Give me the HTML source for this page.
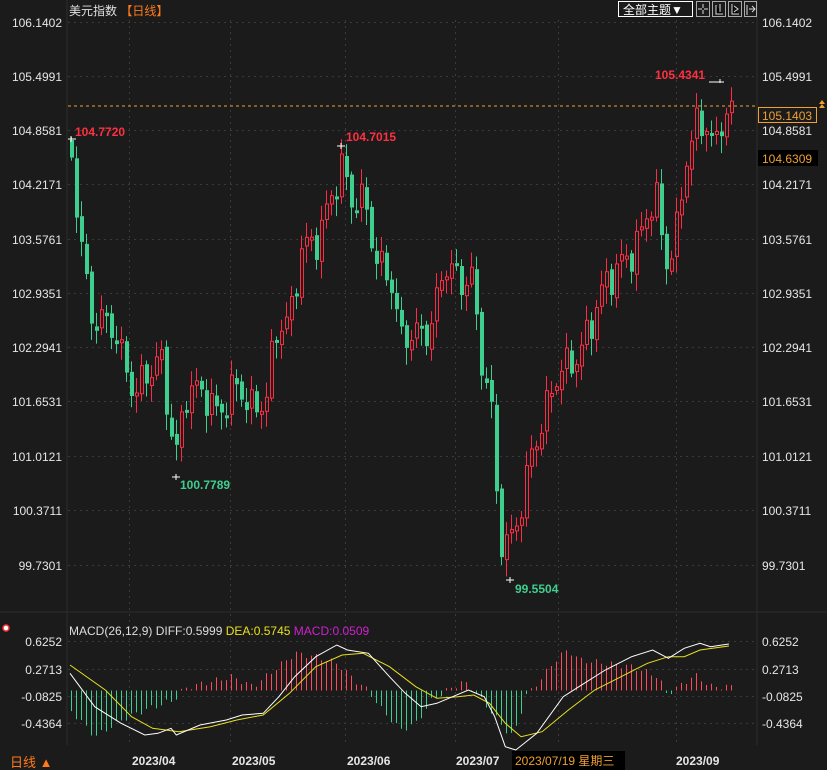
<!DOCTYPE html>
<html><head><meta charset="utf-8"><style>
html,body{margin:0;padding:0;background:#1b1b1b;}
body{width:827px;height:770px;overflow:hidden;position:relative;font-family:"Liberation Sans","Noto Sans CJK SC",sans-serif;}
svg{position:absolute;left:0;top:0}
</style></head><body>
<svg id="s" width="827" height="770" xmlns="http://www.w3.org/2000/svg" font-family="Liberation Sans, Noto Sans CJK SC, sans-serif">
<rect width="827" height="770" fill="#1b1b1b"/>
<g id="grid" stroke="#3a3a3a" stroke-dasharray="2,4" stroke-width="1"></g>
<line x1="67" y1="0" x2="67" y2="745" stroke="#2c2c2c"/>
<line x1="757" y1="0" x2="757" y2="745" stroke="#2c2c2c"/>
<line x1="0" y1="612" x2="827" y2="612" stroke="#2c2c2c"/>
<g id="cand"></g>
<g id="hist"></g>
<polyline id="dea" fill="none" stroke="#e8e020" stroke-width="1"/>
<polyline id="diff" fill="none" stroke="#ffffff" stroke-width="1"/>
<line x1="68" y1="106" x2="757" y2="106" stroke="#f0a030" stroke-dasharray="3,3"/>
<g font-size="12" fill="#e6e6e6" id="labels"></g>
<text x="69" y="15" font-size="12" fill="#e0e0e0">美元指数 <tspan fill="#ff7a1a">【日线】</tspan></text>
<rect x="618.5" y="1.5" width="74" height="15" fill="none" stroke="#fff"/>
<text x="623" y="14" font-size="12" fill="#fff">全部主题▼</text>
<g fill="none" stroke="#aaa"><rect x="696.5" y="1.5" width="13" height="15"/><rect x="712.5" y="1.5" width="13" height="15"/><rect x="728.5" y="1.5" width="13" height="15"/><rect x="744.5" y="1.5" width="12" height="15"/></g>
<g stroke="#ddd" stroke-width="1"><path d="M703 4v4M703 10v4M698 9h4M704 9h4M716 5v9h7M720 4v8M732 4v10h7M734 6l4 3-4 3M747 5v10M749 9h6M752 6l3 3-3 3"/></g>
<text x="75" y="136" font-size="12" font-weight="bold" fill="#ff3040">104.7720</text>
<text x="346" y="141" font-size="12" font-weight="bold" fill="#ff3040">104.7015</text>
<text x="655" y="79" font-size="12" font-weight="bold" fill="#ff3040">105.4341</text>
<text x="180" y="489" font-size="12" font-weight="bold" fill="#3ecf8e">100.7789</text>
<text x="515" y="593" font-size="12" font-weight="bold" fill="#3ecf8e">99.5504</text>
<g stroke="#fff"><path d="M68 139h8M71 136v6M337 146h8M341 143v6M709 82h15M720 79v4M172 477h8M176 474v6M506 580h8M510 577v6"/></g>
<rect x="758.5" y="107.5" width="58" height="15" fill="#1b1b1b" stroke="#f0a030"/>
<text x="762" y="120" font-size="12" fill="#f0a030">105.1403</text>
<rect x="758" y="150" width="60" height="16" fill="#000"/>
<text x="762" y="163" font-size="12" fill="#f0a030">104.6309</text>
<path d="M819 104l3-4 3 4zM819 108l3-4 3 4z" fill="#f0a030"/>
<circle cx="6" cy="628" r="3" fill="#fff" stroke="#f33" stroke-width="1.5"/>
<text x="69" y="635" font-size="12" fill="#ddd">MACD(26,12,9) DIFF:0.5999 <tspan fill="#e8e020">DEA:0.5745</tspan> <tspan fill="#d020d0">MACD:0.0509</tspan></text>
<g font-size="12" font-weight="bold" fill="#e6e6e6"><text x="132" y="765">2023/04</text><text x="232" y="765">2023/05</text><text x="347" y="765">2023/06</text><text x="456" y="765">2023/07</text><text x="676" y="765">2023/09</text></g>
<rect x="512" y="751" width="113" height="19" fill="#000"/>
<text x="515" y="765" font-size="12" fill="#f0a030">2023/07/19 星期三</text>
<text x="10" y="767" font-size="13" fill="#ff7a1a">日线 ▲</text>
</svg>
<script>
(function(){
var NS="http://www.w3.org/2000/svg";
function el(p,t,a){var e=document.createElementNS(NS,t);for(var k in a)e.setAttribute(k,a[k]);p.appendChild(e);return e;}
function interp(k,x){for(var i=0;i<k.length-1;i++){if(x<=k[i+1][0]){var t=(x-k[i][0])/(k[i+1][0]-k[i][0]);return k[i][1]+t*(k[i+1][1]-k[i][1]);}}return k[k.length-1][1];}
var g=document.getElementById('grid');
var hy=[22,76,130,184,239,293,347,401,456,510,565,641,669,696,723];
var pl=["106.1402","105.4991","104.8581","104.2171","103.5761","102.9351","102.2941","101.6531","101.0121","100.3711","99.7301","0.6252","0.2713","-0.0825","-0.4364"];
var L=document.getElementById('labels');
hy.forEach(function(y,i){el(g,'line',{x1:68,y1:y+.5,x2:757,y2:y+.5});
var t=el(L,'text',{x:62,y:y+5,'text-anchor':'end'});t.textContent=pl[i];
var t2=el(L,'text',{x:762,y:y+5});t2.textContent=pl[i];});
[129,230,345,455,558,676].forEach(function(x){el(g,'line',{x1:x+.5,y1:20,x2:x+.5,y2:745});});
var ck=[[71,150],[80,230],[90,320],[100,330],[115,330],[135,390],[150,380],[160,360],[175,450],[185,390],[200,400],[215,410],[235,380],[250,420],[265,400],[275,320],[290,320],[300,260],[315,240],[330,190],[342,170],[350,210],[365,200],[375,250],[390,280],[400,350],[415,330],[430,320],[445,270],[460,290],[470,260],[480,350],[490,400],[495,490],[500,550],[510,545],[520,500],[530,450],[545,420],[560,370],[575,350],[590,330],[605,290],[620,255],[640,240],[655,200],[665,260],[675,230],[685,160],[695,135],[705,130],[715,145],[722,105],[731,105]];
var C=document.getElementById('cand');var prev=140;
for(var i=0;i<=132;i++){var x=71+i*5;var c=interp(ck,x)+14*Math.sin(i*1.7)+9*Math.sin(i*0.63+1)+6*Math.sin(i*3.1);
var o=prev+3*Math.sin(i*2.9);prev=c;var tp=Math.min(o,c),bt=Math.max(o,c);if(bt-tp<3)bt=tp+3;
var hi=tp-(3+Math.abs(12*Math.sin(i*2.3))),lo=bt+(3+Math.abs(14*Math.sin(i*1.1)));
var up=c<o;var col=up?"#ff2a44":"#3ecf8e";
el(C,'line',{x1:x+.5,y1:hi,x2:x+.5,y2:tp,stroke:col});el(C,'line',{x1:x+.5,y1:bt,x2:x+.5,y2:lo,stroke:col});
if(up)el(C,'rect',{x:x-0.5,y:tp,width:3,height:bt-tp,fill:"none",stroke:col});else el(C,'rect',{x:x-1,y:tp,width:4,height:bt-tp,fill:col});}
function cv(a){return a.map(function(p){return [p[0]/1.9,p[1]/3+610];});}
var diff=cv([[133,190],[180,290],[230,340],[275,375],[300,370],[325,355],[335,375],[380,345],[430,330],[460,315],[500,310],[530,260],[560,200],[600,140],[640,105],[660,120],[700,130],[740,200],[770,250],[800,290],[830,280],[860,260],[890,240],[920,260],[940,320],[960,410],[980,420],[1020,370],[1070,260],[1100,230],[1150,180],[1200,140],[1240,120],[1270,145],[1300,115],[1330,100],[1350,110],[1385,102]]);
var dea=cv([[133,165],[200,240],[250,320],[290,355],[340,365],[400,350],[450,330],[500,315],[550,250],[600,170],[650,135],[690,130],[740,170],[790,230],[830,265],[870,260],[900,255],[930,280],[960,340],[990,380],[1030,365],[1080,300],[1130,240],[1180,200],[1230,160],[1270,140],[1300,140],[1330,120],[1385,108]]);
document.getElementById('diff').setAttribute('points',diff.map(function(p){return p[0].toFixed(1)+','+p[1].toFixed(1)}).join(' '));
document.getElementById('dea').setAttribute('points',dea.map(function(p){return p[0].toFixed(1)+','+p[1].toFixed(1)}).join(' '));
var hk=cv([[133,300],[180,380],[230,330],[275,300],[330,270],[345,242],[360,230],[440,200],[480,230],[520,180],[560,130],[600,140],[640,160],[680,220],[700,242],[720,290],[760,360],[790,340],[820,270],[850,240],[880,215],[900,242],[930,300],[960,360],[975,380],[1000,250],[1010,242],[1020,220],[1060,140],[1080,120],[1100,150],[1150,160],[1200,170],[1250,200],[1265,250],[1280,240],[1320,195],[1350,230],[1385,230]]);
var H=document.getElementById('hist');var z=690.5;
for(var i=0;i<=132;i++){var x=71+i*5;var y=interp(hk,x)+3*Math.sin(i*1.9);var col=y<z?"#ff4a5a":"#3ecf8e";
el(H,'line',{x1:x+.5,y1:z,x2:x+.5,y2:y,stroke:col});}
})();
</script>
</body></html>
